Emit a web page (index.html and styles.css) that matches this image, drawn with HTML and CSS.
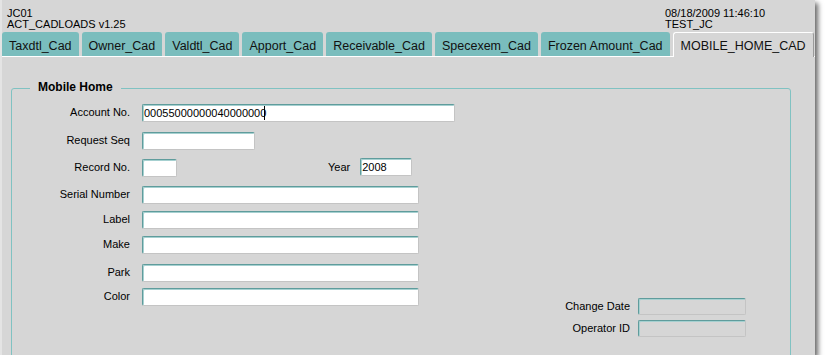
FILE: index.html
```html
<!DOCTYPE html>
<html lang="en">

<head>
    <meta charset="UTF-8">
    <meta name="viewport" content="width=device-width, initial-scale=1.0">
    <title>ACT_CADLOADS</title>

    <link rel="stylesheet" href="styles.css">

</head>

<body>
    <div class="window">
        <div class="titlebar"></div>

        <header class="app-header">
            <div class="app-id">
                <div>JC01</div>
                <div>ACT_CADLOADS v1.25</div>
            </div>
            <div class="session">
                <div>08/18/2009 11:46:10</div>
                <div>TEST_JC</div>
            </div>
        </header>

        <nav class="tabs">
            <span class="tab">Taxdtl_Cad</span>
            <span class="tab">Owner_Cad</span>
            <span class="tab">Valdtl_Cad</span>
            <span class="tab">Apport_Cad</span>
            <span class="tab">Receivable_Cad</span>
            <span class="tab">Specexem_Cad</span>
            <span class="tab">Frozen Amount_Cad</span>
            <span class="tab active">MOBILE_HOME_CAD</span>
        </nav>

        <main class="tab-page">
            <fieldset class="group">
                <legend>Mobile Home</legend>
                <div class="group-body">
                    <div class="form-grid">
                        <label class="lbl" for="account">Account No.</label>
                        <span class="caret-field"><input class="fld w-account" id="account" value="00055000000040000000"></span>

                        <label class="lbl" for="reqSeq">Request Seq</label>
                        <input class="fld w-seq" id="reqSeq">

                        <label class="lbl" for="recordNo">Record No.</label>
                        <div class="inline-row">
                            <input class="fld w-record" id="recordNo">
                            <label class="lbl year-lbl" for="year">Year</label>
                            <input class="fld w-year" id="year" value="2008">
                        </div>

                        <label class="lbl" for="serial">Serial Number</label>
                        <input class="fld w-long" id="serial">

                        <label class="lbl" for="label">Label</label>
                        <input class="fld w-long" id="label">

                        <label class="lbl" for="make">Make</label>
                        <input class="fld w-long" id="make">

                        <label class="lbl" for="park">Park</label>
                        <input class="fld w-long" id="park">

                        <label class="lbl" for="color">Color</label>
                        <input class="fld w-long" id="color">
                    </div>

                    <div class="audit">
                        <label class="lbl" for="changeDate">Change Date</label>
                        <input class="fld readonly" id="changeDate" readonly>
                        <label class="lbl" for="operatorId">Operator ID</label>
                        <input class="fld readonly" id="operatorId" readonly>
                    </div>
                </div>
            </fieldset>
        </main>
    </div>
</body>

</html>
```

FILE: styles.css
```css
body {
    margin: 0;
    background: #ffffff;
    font-family: "Liberation Sans", Arial, sans-serif;
    color: #000;
}

.window {
    width: 815px;
    height: 355px;
    border-left: 2px solid #e4e4e4;
    padding-top: 1px;
    box-sizing: border-box;
    background: #d6d6d6;
    box-shadow: 3px 3px 5px rgba(0, 0, 0, 0.6);
    display: flex;
    flex-direction: column;
    overflow: hidden;
}

.titlebar {
    height: 4px;
    margin-left: 1px;
    background: #2f4a4a;
}

.app-header {
    display: flex;
    padding: 7px 0 0 5px;
    font-size: 11px;
    line-height: 11px;
}

.session {
    margin-left: auto;
    width: 150px;
}

.tabs {
    display: flex;
    gap: 3px;
    margin-top: 2px;
    height: 24px;
    border-bottom: 1px solid #ffffff;
}

.tab {
    background: #7abdbd;
    border-radius: 3px 3px 0 0;
    padding: 4px 7px 0;
    height: 20px;
    line-height: 21px;
    font-size: 12.5px;
    color: #111;
    white-space: nowrap;
}

.tab.active {
    background: #d6d6d6;
    border-top: 1px solid #ffffff;
    border-left: 1px solid #ffffff;
    border-right: 1px solid #9a9a9a;
    padding: 3px 7px 1px;
    margin-bottom: -1px;
}

.tab-page {
    flex: 1;
}

.group {
    margin: 22px 0 0 9px;
    width: 780px;
    box-sizing: border-box;
    height: 320px;
    padding: 6px 0 0;
    border: 1px solid #80c2c2;
    border-radius: 3px 3px 0 0;
}

.group legend {
    margin-left: 18px;
    padding: 0 8px 3px;
    font-size: 12px;
    line-height: 16px;
    font-weight: bold;
}

.group-body {
    display: flex;
    align-items: flex-start;
}

.form-grid {
    display: grid;
    grid-template-columns: 118px auto;
    grid-template-rows: 28px 27px 27px 25px 25px 28px 24px 18px;
    column-gap: 12px;
    align-items: start;
}

.lbl {
    font-size: 11px;
    line-height: 16px;
    text-align: right;
    white-space: nowrap;
}

.fld {
    display: block;
    height: 18px;
    margin: 0;
    padding: 0 0 0 1px;
    box-sizing: border-box;
    border: 1px solid;
    border-color: #5f9c9c #c4c4c4 #c4c4c4 #5f9c9c;
    border-radius: 2px;
    box-shadow: inset 1px 1px 0 #a6d0d0;
    background: #ffffff;
    font-family: "Liberation Sans", Arial, sans-serif;
    font-size: 11px;
    color: #000;
    outline: none;
}

.caret-field {
    position: relative;
    width: fit-content;
}

.caret-field::after {
    content: "";
    position: absolute;
    left: 122px;
    top: 2px;
    width: 1px;
    height: 14px;
    background: #000;
}

.w-account { width: 313px; }
.w-seq { width: 113px; }
.w-record { width: 35px; }
.w-year { width: 52px; margin-top: -1px; }
.w-long { width: 277px; }

.inline-row {
    display: flex;
    align-items: flex-start;
}

.year-lbl {
    margin: 0 10px 0 151px;
}

.audit {
    display: grid;
    grid-template-columns: auto 108px;
    column-gap: 8px;
    row-gap: 5px;
    margin: 194px 44px 0 auto;
}

.audit .lbl {
    line-height: 17px;
}

.fld.readonly {
    height: 17px;
    background: #d6d6d6;
}
```
